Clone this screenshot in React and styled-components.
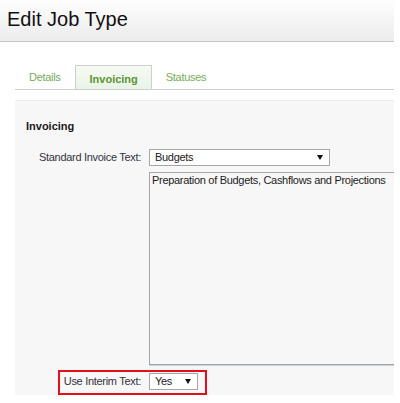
import React from "react";
import styled, { createGlobalStyle } from "styled-components";

const GlobalStyle = createGlobalStyle`
  html, body { margin: 0; padding: 0; background: #ffffff; }
  body { font-family: "Liberation Sans", Arial, sans-serif; }
`;

const Page = styled.div`
  width: 394px;
  height: 403px;
  overflow: hidden;
  background: #ffffff;
`;

const Header = styled.header`
  box-sizing: border-box;
  height: 42px;
  display: flex;
  align-items: center;
  padding: 0 0 3px 7px;
  background: linear-gradient(to bottom, #fefefe 0%, #f4f4f4 55%, #ebebeb 100%);
  border-bottom: 1px solid #c7c7c7;
`;

const Title = styled.h1`
  margin: 0;
  font-family: "Liberation Sans", Arial, sans-serif;
  font-weight: normal;
  font-size: 20px;
  line-height: 23px;
  color: #111111;
`;

const TabBar = styled.nav`
  display: flex;
  align-items: flex-end;
  margin: 23px 0 0 15px;
  border-bottom: 1px solid #cfcfcf;
`;

const Tab = styled.div`
  box-sizing: border-box;
  height: 24px;
  display: flex;
  align-items: center;
  padding: ${(p) => (p.$active ? "2px 13px 0 14px" : "0 13px 2px")};
  font-size: 11px;
  letter-spacing: ${(p) => (p.$active ? "0" : "-0.3px")};
  font-weight: ${(p) => (p.$active ? "bold" : "normal")};
  color: ${(p) => (p.$active ? "#5b9534" : "#74ad58")};
  border: 1px solid ${(p) => (p.$active ? "#cfcfcf" : "transparent")};
  border-bottom: none;
  background: ${(p) =>
    p.$active ? "linear-gradient(to bottom, #f6fbf5 0%, #e8f4e5 100%)" : "transparent"};
`;

const Panel = styled.section`
  margin: 10px 0 0 15px;
  padding: 19px 0 5px 11px;
  background: #f7f7f7;
  border-top: 1px solid #ebebeb;
  overflow: hidden;
  font-size: 11px;
  letter-spacing: -0.3px;
  color: #333340;
`;

const SectionTitle = styled.h2`
  margin: 0 0 16px;
  font-size: 11px;
  line-height: 13px;
  font-weight: bold;
  letter-spacing: 0;
  color: #1a1a1a;
`;

const FieldRow = styled.div`
  position: relative;
  display: grid;
  grid-template-columns: 115px 1fr;
  column-gap: 8px;
  align-items: center;
  margin-top: ${(p) => p.$gap || 0}px;

  ${(p) =>
    p.$highlight &&
    `
    &::after {
      content: "";
      position: absolute;
      left: 32px;
      top: -3px;
      width: 149px;
      height: 25px;
      box-sizing: border-box;
      border: 2px solid #e3101a;
      pointer-events: none;
    }
  `}
`;

const Label = styled.label`
  text-align: right;
  line-height: 13px;
  white-space: nowrap;
`;

const SelectBox = styled.div`
  box-sizing: border-box;
  width: ${(p) => p.$w}px;
  height: 17px;
  display: flex;
  align-items: center;
  justify-content: space-between;
  padding: 0 6px 0 5px;
  background: #ffffff;
  border: 1px solid #a6a6a6;
  color: #222222;
  line-height: 13px;
`;

const Arrow = styled.svg`
  width: 6px;
  height: 5px;
  flex: none;
`;

const TextArea = styled.textarea`
  box-sizing: border-box;
  display: block;
  width: 262px;
  height: 193px;
  margin: 0;
  padding: 1px 2px;
  border: 1px solid #a1a6ab;
  box-shadow: 0 1px 0 #cdd1d5;
  background: #f7f7f7;
  resize: none;
  font-family: "Liberation Sans", Arial, sans-serif;
  font-size: 11px;
  line-height: 13px;
  letter-spacing: -0.3px;
  color: #222222;
  outline: none;
  overflow: hidden;
`;

function Select({ value, width }) {
  return (
    <SelectBox $w={width}>
      <span>{value}</span>
      <Arrow viewBox="0 0 6 5">
        <polygon points="0,0 6,0 3,5" fill="#111" />
      </Arrow>
    </SelectBox>
  );
}

export default function App() {
  return (
    <Page>
      <GlobalStyle />
      <Header>
        <Title>Edit Job Type</Title>
      </Header>
      <TabBar>
        <Tab>Details</Tab>
        <Tab $active>Invoicing</Tab>
        <Tab>Statuses</Tab>
      </TabBar>
      <Panel>
        <SectionTitle>Invoicing</SectionTitle>
        <FieldRow>
          <Label>Standard Invoice Text:</Label>
          <Select value="Budgets" width={181} />
        </FieldRow>
        <FieldRow $gap={6}>
          <span />
          <TextArea
            readOnly
            value="Preparation of Budgets, Cashflows and Projections"
          />
        </FieldRow>
        <FieldRow $gap={8} $highlight>
          <Label>Use Interim Text:</Label>
          <Select value="Yes" width={49} />
        </FieldRow>
      </Panel>
    </Page>
  );
}
